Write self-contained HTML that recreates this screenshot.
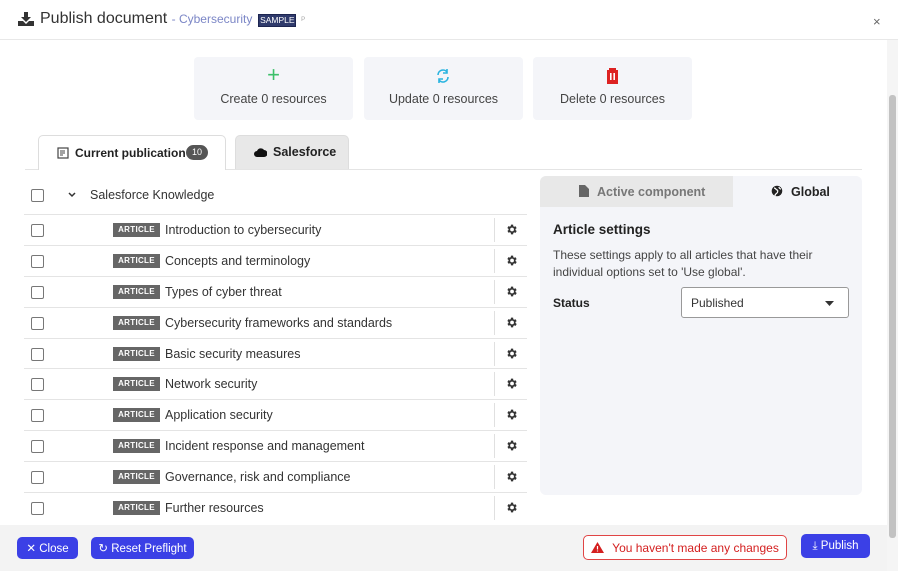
<!DOCTYPE html>
<html><head><meta charset="utf-8"><style>
*{box-sizing:border-box;margin:0;padding:0}
body{width:898px;height:571px;overflow:hidden;background:#fff;font-family:"Liberation Sans",sans-serif;color:#333;position:relative}
.abs{position:absolute}
.card{position:absolute;top:57px;width:159px;height:63px;background:#f4f5f9;border-radius:4px;text-align:center;font-size:12.5px;color:#444}
.card .ic{position:absolute;top:11px;left:0;right:0;height:16px}
.card .lb{position:absolute;top:35px;left:0;right:0}
.row{position:absolute;left:24px;width:503px;height:31px;border-top:1px solid #e4e4e4}
.cb{position:absolute;left:7px;top:9px;width:13px;height:13px;border:1px solid #777;border-radius:2px;background:#fff}
.badge{position:absolute;left:89px;top:8px;width:47px;height:14px;background:#666;color:#fff;font-size:8px;font-weight:bold;text-align:center;line-height:14px;letter-spacing:.3px}
.t{position:absolute;left:141px;top:8px;font-size:12.5px;color:#333}
.div{position:absolute;left:470px;top:3px;width:1px;height:24px;background:#e0e0e0}
.gear{position:absolute;left:481px;top:8px}
.btn{position:absolute;background:#3b40e6;color:#fff;border-radius:5px;font-size:11.5px;display:flex;align-items:center;justify-content:center;gap:4px}
</style></head><body>
<div class="abs" style="left:0;top:0;width:898px;height:40px;border-bottom:1px solid #e8e8e8"></div>
<svg class="abs" style="left:18px;top:12px" width="16" height="14" viewBox="0 0 16 14"><path d="M6 0h4v5h3l-5 5-5-5h3z" fill="#333"/><path d="M0 9h5l3 3 3-3h5v5H0z" fill="#333"/></svg>
<div class="abs" style="left:40px;top:10px;font-size:16px;color:#333;white-space:nowrap;display:flex;align-items:baseline">Publish document&nbsp;<span style="font-size:12px;color:#7b86c6">- Cybersecurity</span>
<span style="display:inline-block;margin-left:6px;width:38px;height:13px;background:#2f3a6b;border:1px solid #1d2550;color:#fff;font-size:8.5px;text-align:center;line-height:11px">SAMPLE</span>
<span style="margin-left:5px;font-size:9px;color:#aaa">ᴾ</span></div>
<div class="abs" style="left:873px;top:14px;font-size:13px;color:#666">×</div>

<div class="card" style="left:194px"><div class="ic" style="color:#3cc06a;font-size:22px;line-height:14px">+</div><div class="lb">Create 0 resources</div></div>
<div class="card" style="left:364px"><svg class="ic" style="left:71px;width:16px" viewBox="0 0 16 16"><path d="M3 7a5 5 0 0 1 9-3M13 9a5 5 0 0 1-9 3" stroke="#2ab4e0" stroke-width="1.6" fill="none"/><path d="M12 1v4H8M4 15v-4h4" stroke="#2ab4e0" stroke-width="1.6" fill="none"/></svg><div class="lb">Update 0 resources</div></div>
<div class="card" style="left:533px"><svg class="ic" style="left:73px;width:13px" viewBox="0 0 13 16"><rect x="1" y="2" width="11" height="14" fill="#dd2222"/><rect x="4" y="5" width="1.6" height="7" fill="#fff"/><rect x="7.4" y="5" width="1.6" height="7" fill="#fff"/><rect x="3" y="0" width="7" height="2" fill="#dd2222"/></svg><div class="lb">Delete 0 resources</div></div>

<div class="abs" style="left:25px;top:169px;width:837px;height:1px;background:#e4e4e4"></div>
<div class="abs" style="left:38px;top:135px;width:188px;height:35px;background:#fff;border:1px solid #ddd;border-bottom:none;border-radius:5px 5px 0 0;font-size:12px;font-weight:bold;color:#222;white-space:nowrap">
<svg class="abs" style="left:18px;top:11px" width="12" height="12" viewBox="0 0 12 12"><rect x="1" y="1" width="10" height="10" fill="none" stroke="#444" stroke-width="1.2"/><path d="M3 4h5M3 6h5M3 8h3" stroke="#444"/></svg>
<span class="abs" style="left:36px;top:10px">Current publication</span>
<span class="abs" style="left:147px;top:9px;width:22px;height:15px;background:#555;color:#fff;border-radius:8px;font-size:9px;text-align:center;line-height:15px;font-weight:normal">10</span></div>
<div class="abs" style="left:235px;top:135px;width:114px;height:34px;background:#e8e8e8;border:1px solid #ddd;border-bottom:none;border-radius:5px 5px 0 0;font-size:12.5px;font-weight:bold;color:#222">
<svg class="abs" style="left:18px;top:11px" width="13" height="10" viewBox="0 0 13 10"><path d="M3 10a3 3 0 0 1 0-6 4 4 0 0 1 7-1 3.5 3.5 0 0 1 0 7z" fill="#111"/></svg>
<span class="abs" style="left:37px;top:9px">Salesforce</span></div>

<div class="abs" style="left:24px;top:180px;width:503px;height:34px">
<div class="cb" style="top:9px"></div>
<svg class="abs" style="left:44px;top:12px" width="8" height="6" viewBox="0 0 8 6"><path d="M1 1l3 3 3-3" stroke="#333" stroke-width="1.5" fill="none"/></svg>
<div class="abs" style="left:66px;top:8px;font-size:12.5px;color:#333">Salesforce Knowledge</div></div>

<div class="row" style="top:214px"><div class="cb"></div><div class="badge">ARTICLE</div><div class="t">Introduction to cybersecurity</div><div class="div"></div><svg class="gear" width="13" height="13" viewBox="0 0 24 24"><path fill="#333" d="M19.4 13a7.5 7.5 0 0 0 0-2l2.1-1.6-2-3.5-2.5 1a7 7 0 0 0-1.7-1L15 3h-4l-.4 2.7a7 7 0 0 0-1.7 1l-2.5-1-2 3.5L6.6 11a7.5 7.5 0 0 0 0 2l-2.1 1.6 2 3.5 2.5-1a7 7 0 0 0 1.7 1L11 21h4l.4-2.7a7 7 0 0 0 1.7-1l2.5 1 2-3.5zM13 15.5a3.5 3.5 0 1 1 0-7 3.5 3.5 0 0 1 0 7z"/></svg></div>
<div class="row" style="top:245px"><div class="cb"></div><div class="badge">ARTICLE</div><div class="t">Concepts and terminology</div><div class="div"></div><svg class="gear" width="13" height="13" viewBox="0 0 24 24"><path fill="#333" d="M19.4 13a7.5 7.5 0 0 0 0-2l2.1-1.6-2-3.5-2.5 1a7 7 0 0 0-1.7-1L15 3h-4l-.4 2.7a7 7 0 0 0-1.7 1l-2.5-1-2 3.5L6.6 11a7.5 7.5 0 0 0 0 2l-2.1 1.6 2 3.5 2.5-1a7 7 0 0 0 1.7 1L11 21h4l.4-2.7a7 7 0 0 0 1.7-1l2.5 1 2-3.5zM13 15.5a3.5 3.5 0 1 1 0-7 3.5 3.5 0 0 1 0 7z"/></svg></div>
<div class="row" style="top:276px"><div class="cb"></div><div class="badge">ARTICLE</div><div class="t">Types of cyber threat</div><div class="div"></div><svg class="gear" width="13" height="13" viewBox="0 0 24 24"><path fill="#333" d="M19.4 13a7.5 7.5 0 0 0 0-2l2.1-1.6-2-3.5-2.5 1a7 7 0 0 0-1.7-1L15 3h-4l-.4 2.7a7 7 0 0 0-1.7 1l-2.5-1-2 3.5L6.6 11a7.5 7.5 0 0 0 0 2l-2.1 1.6 2 3.5 2.5-1a7 7 0 0 0 1.7 1L11 21h4l.4-2.7a7 7 0 0 0 1.7-1l2.5 1 2-3.5zM13 15.5a3.5 3.5 0 1 1 0-7 3.5 3.5 0 0 1 0 7z"/></svg></div>
<div class="row" style="top:307px"><div class="cb"></div><div class="badge">ARTICLE</div><div class="t">Cybersecurity frameworks and standards</div><div class="div"></div><svg class="gear" width="13" height="13" viewBox="0 0 24 24"><path fill="#333" d="M19.4 13a7.5 7.5 0 0 0 0-2l2.1-1.6-2-3.5-2.5 1a7 7 0 0 0-1.7-1L15 3h-4l-.4 2.7a7 7 0 0 0-1.7 1l-2.5-1-2 3.5L6.6 11a7.5 7.5 0 0 0 0 2l-2.1 1.6 2 3.5 2.5-1a7 7 0 0 0 1.7 1L11 21h4l.4-2.7a7 7 0 0 0 1.7-1l2.5 1 2-3.5zM13 15.5a3.5 3.5 0 1 1 0-7 3.5 3.5 0 0 1 0 7z"/></svg></div>
<div class="row" style="top:338px"><div class="cb"></div><div class="badge">ARTICLE</div><div class="t">Basic security measures</div><div class="div"></div><svg class="gear" width="13" height="13" viewBox="0 0 24 24"><path fill="#333" d="M19.4 13a7.5 7.5 0 0 0 0-2l2.1-1.6-2-3.5-2.5 1a7 7 0 0 0-1.7-1L15 3h-4l-.4 2.7a7 7 0 0 0-1.7 1l-2.5-1-2 3.5L6.6 11a7.5 7.5 0 0 0 0 2l-2.1 1.6 2 3.5 2.5-1a7 7 0 0 0 1.7 1L11 21h4l.4-2.7a7 7 0 0 0 1.7-1l2.5 1 2-3.5zM13 15.5a3.5 3.5 0 1 1 0-7 3.5 3.5 0 0 1 0 7z"/></svg></div>
<div class="row" style="top:368px"><div class="cb"></div><div class="badge">ARTICLE</div><div class="t">Network security</div><div class="div"></div><svg class="gear" width="13" height="13" viewBox="0 0 24 24"><path fill="#333" d="M19.4 13a7.5 7.5 0 0 0 0-2l2.1-1.6-2-3.5-2.5 1a7 7 0 0 0-1.7-1L15 3h-4l-.4 2.7a7 7 0 0 0-1.7 1l-2.5-1-2 3.5L6.6 11a7.5 7.5 0 0 0 0 2l-2.1 1.6 2 3.5 2.5-1a7 7 0 0 0 1.7 1L11 21h4l.4-2.7a7 7 0 0 0 1.7-1l2.5 1 2-3.5zM13 15.5a3.5 3.5 0 1 1 0-7 3.5 3.5 0 0 1 0 7z"/></svg></div>
<div class="row" style="top:399px"><div class="cb"></div><div class="badge">ARTICLE</div><div class="t">Application security</div><div class="div"></div><svg class="gear" width="13" height="13" viewBox="0 0 24 24"><path fill="#333" d="M19.4 13a7.5 7.5 0 0 0 0-2l2.1-1.6-2-3.5-2.5 1a7 7 0 0 0-1.7-1L15 3h-4l-.4 2.7a7 7 0 0 0-1.7 1l-2.5-1-2 3.5L6.6 11a7.5 7.5 0 0 0 0 2l-2.1 1.6 2 3.5 2.5-1a7 7 0 0 0 1.7 1L11 21h4l.4-2.7a7 7 0 0 0 1.7-1l2.5 1 2-3.5zM13 15.5a3.5 3.5 0 1 1 0-7 3.5 3.5 0 0 1 0 7z"/></svg></div>
<div class="row" style="top:430px"><div class="cb"></div><div class="badge">ARTICLE</div><div class="t">Incident response and management</div><div class="div"></div><svg class="gear" width="13" height="13" viewBox="0 0 24 24"><path fill="#333" d="M19.4 13a7.5 7.5 0 0 0 0-2l2.1-1.6-2-3.5-2.5 1a7 7 0 0 0-1.7-1L15 3h-4l-.4 2.7a7 7 0 0 0-1.7 1l-2.5-1-2 3.5L6.6 11a7.5 7.5 0 0 0 0 2l-2.1 1.6 2 3.5 2.5-1a7 7 0 0 0 1.7 1L11 21h4l.4-2.7a7 7 0 0 0 1.7-1l2.5 1 2-3.5zM13 15.5a3.5 3.5 0 1 1 0-7 3.5 3.5 0 0 1 0 7z"/></svg></div>
<div class="row" style="top:461px"><div class="cb"></div><div class="badge">ARTICLE</div><div class="t">Governance, risk and compliance</div><div class="div"></div><svg class="gear" width="13" height="13" viewBox="0 0 24 24"><path fill="#333" d="M19.4 13a7.5 7.5 0 0 0 0-2l2.1-1.6-2-3.5-2.5 1a7 7 0 0 0-1.7-1L15 3h-4l-.4 2.7a7 7 0 0 0-1.7 1l-2.5-1-2 3.5L6.6 11a7.5 7.5 0 0 0 0 2l-2.1 1.6 2 3.5 2.5-1a7 7 0 0 0 1.7 1L11 21h4l.4-2.7a7 7 0 0 0 1.7-1l2.5 1 2-3.5zM13 15.5a3.5 3.5 0 1 1 0-7 3.5 3.5 0 0 1 0 7z"/></svg></div>
<div class="row" style="top:492px"><div class="cb"></div><div class="badge">ARTICLE</div><div class="t">Further resources</div><div class="div"></div><svg class="gear" width="13" height="13" viewBox="0 0 24 24"><path fill="#333" d="M19.4 13a7.5 7.5 0 0 0 0-2l2.1-1.6-2-3.5-2.5 1a7 7 0 0 0-1.7-1L15 3h-4l-.4 2.7a7 7 0 0 0-1.7 1l-2.5-1-2 3.5L6.6 11a7.5 7.5 0 0 0 0 2l-2.1 1.6 2 3.5 2.5-1a7 7 0 0 0 1.7 1L11 21h4l.4-2.7a7 7 0 0 0 1.7-1l2.5 1 2-3.5zM13 15.5a3.5 3.5 0 1 1 0-7 3.5 3.5 0 0 1 0 7z"/></svg></div>

<div class="abs" style="left:540px;top:176px;width:322px;height:319px;background:#f4f5f9;border-radius:6px;overflow:hidden">
<div class="abs" style="left:0;top:0;width:193px;height:31px;background:#e8e8e8;font-size:12.5px;font-weight:bold;color:#777">
<svg class="abs" style="left:39px;top:9px" width="10" height="12" viewBox="0 0 10 12"><path d="M0 0h6l4 4v8H0z" fill="#666"/></svg><span class="abs" style="left:57px;top:9px">Active component</span></div>
<div class="abs" style="left:193px;top:0;width:129px;height:31px;font-size:12.5px;font-weight:bold;color:#222">
<svg class="abs" style="left:38px;top:9px" width="12" height="12" viewBox="0 0 12 12"><circle cx="6" cy="6" r="5.3" fill="#222"/><path d="M3 3c2 0 2 2 3 2s1 2 0 3-2 1-2 3M8 2c0 1 1 2 2 2" stroke="#fff" stroke-width="1.2" fill="none"/></svg><span class="abs" style="left:58px;top:9px">Global</span></div>
<div class="abs" style="left:13px;top:46px;font-size:13.5px;font-weight:bold;color:#222">Article settings</div>
<div class="abs" style="left:13px;top:71px;width:290px;font-size:12px;line-height:17px;color:#444">These settings apply to all articles that have their individual options set to 'Use global'.</div>
<div class="abs" style="left:13px;top:120px;font-size:12px;font-weight:bold;color:#222">Status</div>
<div class="abs" style="left:141px;top:111px;width:168px;height:31px;background:#fff;border:1px solid #999;border-radius:3px;font-size:12px;color:#333;padding:8px 0 0 9px">Published<svg class="abs" style="left:143px;top:13px" width="9" height="5" viewBox="0 0 9 5"><path d="M0 0h9L4.5 5z" fill="#333"/></svg></div>
</div>

<div class="abs" style="left:0;top:525px;width:888px;height:46px;background:#f3f3f3"></div>
<div class="abs" style="left:887px;top:40px;width:11px;height:531px;background:#f5f5f5"></div>
<div class="abs" style="left:889px;top:95px;width:7px;height:443px;background:#c2c2c2;border-radius:3px"></div>
<div class="btn" style="left:17px;top:537px;width:61px;height:22px">✕ Close</div>
<div class="btn" style="left:91px;top:537px;width:103px;height:22px">↻ Reset Preflight</div>
<div class="abs" style="left:583px;top:535px;width:204px;height:25px;border:1px solid #e04545;border-radius:5px;background:#fff;color:#d42020;font-size:12px;display:flex;align-items:center;justify-content:center;gap:8px"><svg width="13" height="11" viewBox="0 0 13 11"><path d="M6.5 0L13 11H0z" fill="#d42020"/><path d="M6.5 4v3.5M6.5 8.5v1" stroke="#fff" stroke-width="1.2"/></svg>You haven't made any changes</div>
<div class="btn" style="left:801px;top:534px;width:69px;height:24px">⤓ Publish</div>
</body></html>
